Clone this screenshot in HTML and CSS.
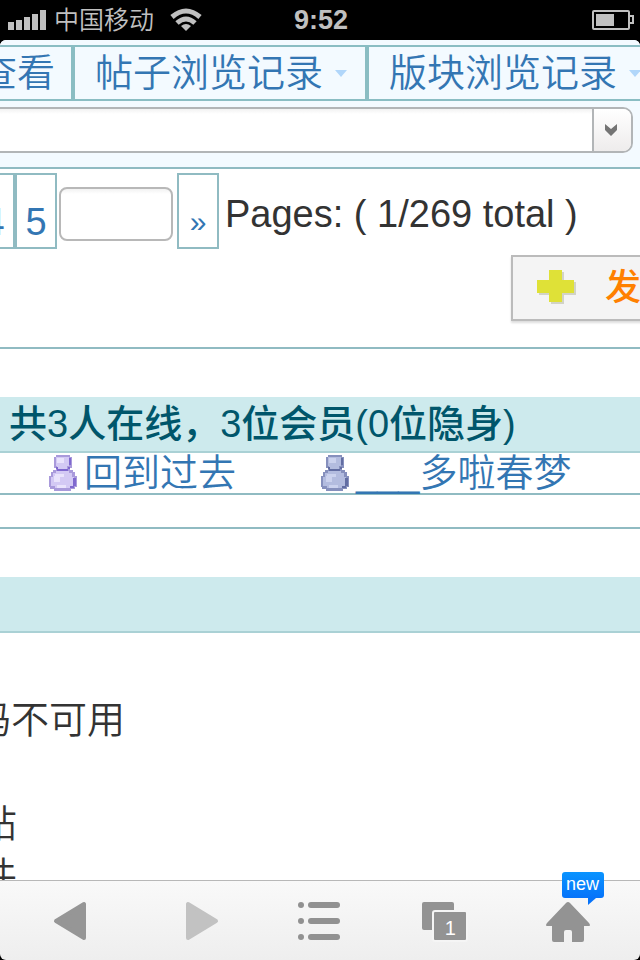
FILE: index.html
```html
<!DOCTYPE html>
<html lang="zh-CN">
<head>
    <meta charset="UTF-8">
    <meta name="viewport" content="width=device-width, initial-scale=1.0">
    <title>论坛</title>
    <link rel="stylesheet" href="styles.css">
</head>
<body>
    <header class="status-bar">
        <div class="carrier">
            <svg class="signal" width="38" height="20" viewBox="0 0 38 20" fill="#c0c0c0">
                <path d="M0 12h6v8H0zM8 10h6v10H8zM16 7h6v13h-6zM24 4h6v16h-6zM32 0h6v20h-6z"/>
            </svg>
            <span>中国移动</span>
            <svg class="wifi" width="32" height="24" viewBox="0 0 32 24" fill="none" stroke="#c0c0c0">
                <path d="M2 9Q16-3 30 9" stroke-width="5"/>
                <path d="M7 15Q16 7 25 15" stroke-width="5"/>
                <path d="M16 23l-5-5q5-4 10 0z" fill="#c0c0c0" stroke="none"/>
            </svg>
        </div>
        <div class="clock">9:52</div>
        <svg class="battery" width="42" height="20" viewBox="0 0 42 20" fill="none" stroke="#c0c0c0" stroke-width="2">
            <rect x="1" y="1" width="36" height="18" rx="1"/>
            <path d="M38 6h3v7h-3"/>
            <path d="M4 4h18v12H4z" fill="#c0c0c0" stroke="none"/>
        </svg>
    </header>

    <main class="page">
        <div class="top">
            <nav class="tabs">
                <a class="tab" href="#">查看</a>
                <a class="tab has-menu" href="#">帖子浏览记录<i class="caret"></i></a>
                <a class="tab has-menu" href="#">版块浏览记录<i class="caret"></i></a>
            </nav>
            <div class="combo">
                <input class="combo-input" type="text" aria-label="地址">
                <button class="combo-button" type="button" aria-label="展开">
                    <svg width="14" height="14" viewBox="0 0 14 14"><path d="M1 1l6 5 6-5v6l-6 6-6-6z" fill="#747474"/></svg>
                </button>
            </div>
        </div>

        <div class="threads">
            <div class="pager">
                <a class="page-link" href="#">4</a>
                <a class="page-link" href="#">5</a>
                <input class="page-input" type="text" aria-label="页码">
                <a class="page-link page-next" href="#">»</a>
                <span class="page-total">Pages: ( 1/269 total )</span>
            </div>
            <div class="actions">
                <button class="post-button" type="button">
                    <svg width="40" height="36" viewBox="0 0 40 36">
                        <path d="M14 2h13v10h12v13H27v9H14v-9H2V12h12z" fill="#d2d3c6"/>
                        <path d="M12 0h13v10h12v13H25v9H12v-9H0V10h12z" fill="#dfe137"/>
                    </svg>
                    <span>发帖</span>
                </button>
            </div>
        </div>

        <section class="online">
            <h2 class="bar">共3人在线，3位会员(0位隐身)</h2>
            <div class="users">
                <a class="user" href="#">
                    <svg width="30" height="36" viewBox="0 0 30 36" shape-rendering="crispEdges">
                        <path d="M8 0h14v2h2v11h-2v2h3v2h2v4h2v11h-2v2h-4v2H6v-2H2v-2H1V21h2v-4h2v-2h3v-2H6V2h2z" fill="#a99adb"/>
                        <path d="M8 2h13v9h-2v3H9v-3H8zM8 16h13v2h3v4h2v9h-3v2H7v-2H3v-9h2v-4h3z" fill="#d3c9f4"/>
                        <path d="M9 3h7v5H9zM7 19h9v3h-4v5H6v-6h1zM9 30h9v3H9z" fill="#e9e3fc"/>
                        <path d="M8 12h2v2h10v-2h2v2h-2v2H9v-2H8zM25 23h3v8h-2v2h-4v-2h3zM21 3h2v7h-2z" fill="#7f68cf"/>
                    </svg>
                    <span>回到过去</span>
                </a>
                <a class="user" href="#">
                    <svg width="30" height="36" viewBox="0 0 30 36" shape-rendering="crispEdges">
                        <path d="M8 0h14v2h2v11h-2v2h3v2h2v4h2v11h-2v2h-4v2H6v-2H2v-2H1V21h2v-4h2v-2h3v-2H6V2h2z" fill="#8690bd"/>
                        <path d="M8 2h13v9h-2v3H9v-3H8zM8 16h13v2h3v4h2v9h-3v2H7v-2H3v-9h2v-4h3z" fill="#b3bcdf"/>
                        <path d="M9 3h7v5H9zM7 19h9v3h-4v5H6v-6h1zM9 30h9v3H9z" fill="#cbd2ee"/>
                        <path d="M8 12h2v2h10v-2h2v2h-2v2H9v-2H8zM25 23h3v8h-2v2h-4v-2h3zM21 3h2v7h-2z" fill="#626da2"/>
                    </svg>
                    <span>___多啦春梦</span>
                </a>
            </div>
        </section>

        <section class="rules">
            <div class="bar"></div>
            <p class="rules-intro">码不可用</p>
            <ul class="rules-list">
                <li>帖</li>
                <li>件</li>
            </ul>
        </section>
    </main>

    <footer class="toolbar">
        <button class="tool" type="button" aria-label="后退">
            <svg width="80" height="48" viewBox="0 0 80 48">
                <path d="M54 6v34L26 23z" fill="#969696" stroke="#969696" stroke-width="4" stroke-linejoin="round"/>
            </svg>
        </button>
        <button class="tool" type="button" aria-label="前进">
            <svg width="80" height="48" viewBox="0 0 80 48">
                <path d="M33 6v34l28-17z" fill="#c2c2c2" stroke="#c2c2c2" stroke-width="4" stroke-linejoin="round"/>
            </svg>
        </button>
        <button class="tool" type="button" aria-label="菜单">
            <svg width="80" height="48" viewBox="0 0 80 48" fill="#919191">
                <circle cx="21" cy="7" r="3"/><rect x="28" y="4" width="32" height="6" rx="3"/>
                <circle cx="21" cy="23" r="3"/><rect x="28" y="20" width="32" height="6" rx="3"/>
                <circle cx="21" cy="39" r="3"/><rect x="28" y="36" width="32" height="6" rx="3"/>
            </svg>
        </button>
        <button class="tool" type="button" aria-label="窗口">
            <svg width="80" height="48" viewBox="0 0 80 48" fill="#939393">
                <rect x="17" y="4" width="32" height="28" rx="2"/>
                <rect x="28" y="13" width="34" height="30" rx="2" stroke="#f5f5f5" stroke-width="2"/>
            </svg>
            <span class="window-count">1</span>
        </button>
        <button class="tool" type="button" aria-label="主页">
            <svg width="80" height="48" viewBox="0 0 80 48" fill="#939393">
                <path d="M38 4q1 0 2 1l19 20q2 3 0 3h-5v14q0 2-2 2h-10V34q0-2-2-2h-4q-2 0-2 2v10H24q-2 0-2-2V28h-5q-2 0 0-3L36 5q1-1 2-1z"/>
            </svg>
            <span class="badge">new</span>
        </button>
    </footer>
</body>
</html>
```
FILE: styles.css
```css
* {
    box-sizing: border-box;
}
body {
    margin: 0;
    height: 100vh;
    display: flex;
    flex-direction: column;
    overflow: hidden;
    background: #000;
    color: #333;
    font-family: "Liberation Sans", "Noto Sans CJK SC", sans-serif;
    font-size: 38px;
    font-weight: 350;
}
a {
    color: #3376b3;
    text-decoration: none;
}
svg {
    display: block;
    flex: none;
}
button {
    font-family: inherit;
    padding: 0;
    cursor: pointer;
}

/* Status bar */
.status-bar {
    display: grid;
    grid-template-columns: 1fr auto 1fr;
    align-items: center;
    height: 40px;
    padding: 0 6px 0 8px;
    color: #c0c0c0;
    font-size: 25px;
    line-height: 40px;
    flex: none;
}
.carrier {
    display: flex;
    align-items: center;
    gap: 8px;
}
.wifi {
    margin-left: 8px;
}
.clock {
    font-size: 27px;
    font-weight: bold;
}
.battery {
    justify-self: end;
}

/* Page */
.page {
    flex: 1;
    min-height: 0;
    overflow: hidden;
    background: #fff;
    border-radius: 6px 6px 0 0;
    white-space: nowrap;
}
.top {
    padding: 5px 0 14px;
    background: #f3faff;
    border-bottom: 2px solid #90bbc2;
}
.tabs {
    display: flex;
    margin-left: -43px; /* first tab is scrolled out */
}
.tab {
    display: flex;
    align-items: center;
    flex: none;
    height: 56px;
    padding: 0 16px 0 20px;
    border: 2px solid #8abdc3;
    line-height: 52px;
}
.has-menu {
    gap: 12px;
}
.caret {
    border: 6px solid transparent;
    border-top: 7px solid #b0d6fa;
    border-bottom: 0;
    margin-right: 2px;
}
.combo {
    display: flex;
    height: 46px;
    margin: 6px 7px 0 -20px;
    border: 2px solid #b2b5b7;
    border-radius: 10px;
    background: #fff;
    overflow: hidden;
}
.combo-input {
    flex: 1;
    min-width: 0;
    border: 0;
    font-size: 28px;
    background: linear-gradient(#f2f2f2, #fff 5px);
}
.combo-button {
    display: flex;
    align-items: center;
    justify-content: center;
    width: 39px;
    padding-right: 4px;
    border: 0;
    border-left: 2px solid #b2b5b7;
    background: linear-gradient(#fff, #eeecec);
}

/* Pager */
.threads {
    padding: 4px 0 26px;
    border-bottom: 2px solid #90bbc2;
}
.pager {
    display: flex;
    align-items: center;
    margin-left: -27px;
}
.page-link {
    width: 42px;
    height: 76px;
    padding-top: 22px;
    border: 2px solid #90bbc2;
    line-height: 50px;
    text-align: center;
    flex: none;
}
.page-next {
    font-size: 30px;
}
.page-input {
    width: 114px;
    height: 54px;
    margin: 6px 4px 0 2px;
    border: 2px solid #b8b8b8;
    border-radius: 8px;
    font-size: 28px;
    background: linear-gradient(#f2f2f2, #fff 5px);
}
.page-total {
    margin: 6px 0 0 6px;
}
.actions {
    display: flex;
    justify-content: flex-end;
    margin: 6px -65px 0 0;
}
.post-button {
    display: flex;
    align-items: center;
    gap: 28px;
    width: 194px;
    height: 66px;
    padding: 0 24px;
    border: 2px solid #bbb;
    background: #f4f4f4;
    box-shadow: 0 2px 2px #ddd;
    color: #ff8000;
    font-size: 36px;
    font-weight: 500;
    line-height: 60px;
}

/* Online users */
.bar {
    height: 56px;
    margin: 48px 0 0;
    padding-left: 9px;
    background: #cdeaed;
    border-bottom: 2px solid #aad1d5;
    color: #00566b;
    font-size: 38px;
    font-weight: 500;
    line-height: 54px;
}
.users {
    display: grid;
    grid-template-columns: 272px 272px;
    height: 42px;
    padding-left: 48px;
    border-bottom: 2px solid #90bbc2;
    line-height: 40px;
}
.user {
    display: flex;
    align-items: center;
    gap: 6px;
}
.online {
    padding-bottom: 32px;
    border-bottom: 2px solid #90bbc2;
}

/* Rules */
.rules-intro {
    margin: 61px 0 52px -27px;
    line-height: 52px;
}
.rules-list {
    margin: 0 0 0 -21px;
    padding: 0;
    list-style: none;
    line-height: 52px;
}

/* Toolbar */
.toolbar {
    display: flex;
    flex: none;
    height: 80px;
    padding: 2px 8px 0;
    border-top: 1px solid #b8b8b8;
    border-radius: 0 0 6px 6px;
    background: linear-gradient(#f9f9f9, #eee);
}
.tool {
    position: relative;
    flex: 1;
    display: flex;
    justify-content: center;
    align-items: center;
    border: 0;
    background: none;
}
.window-count {
    position: absolute;
    left: 50%;
    top: 32px;
    color: #fff;
    font-size: 20px;
    line-height: 26px;
}
.badge {
    position: absolute;
    left: 50%;
    top: -11px;
    width: 42px;
    height: 26px;
    margin-left: -8px;
    border-radius: 3px;
    background: linear-gradient(#0a94ff, #0673fa);
    color: #fff;
    font-size: 18px;
    line-height: 24px;
}
.badge::after {
    content: "";
    position: absolute;
    right: 8px;
    top: 26px;
    border-top: 7px solid #0673fa;
    border-right: 8px solid transparent;
}
```
